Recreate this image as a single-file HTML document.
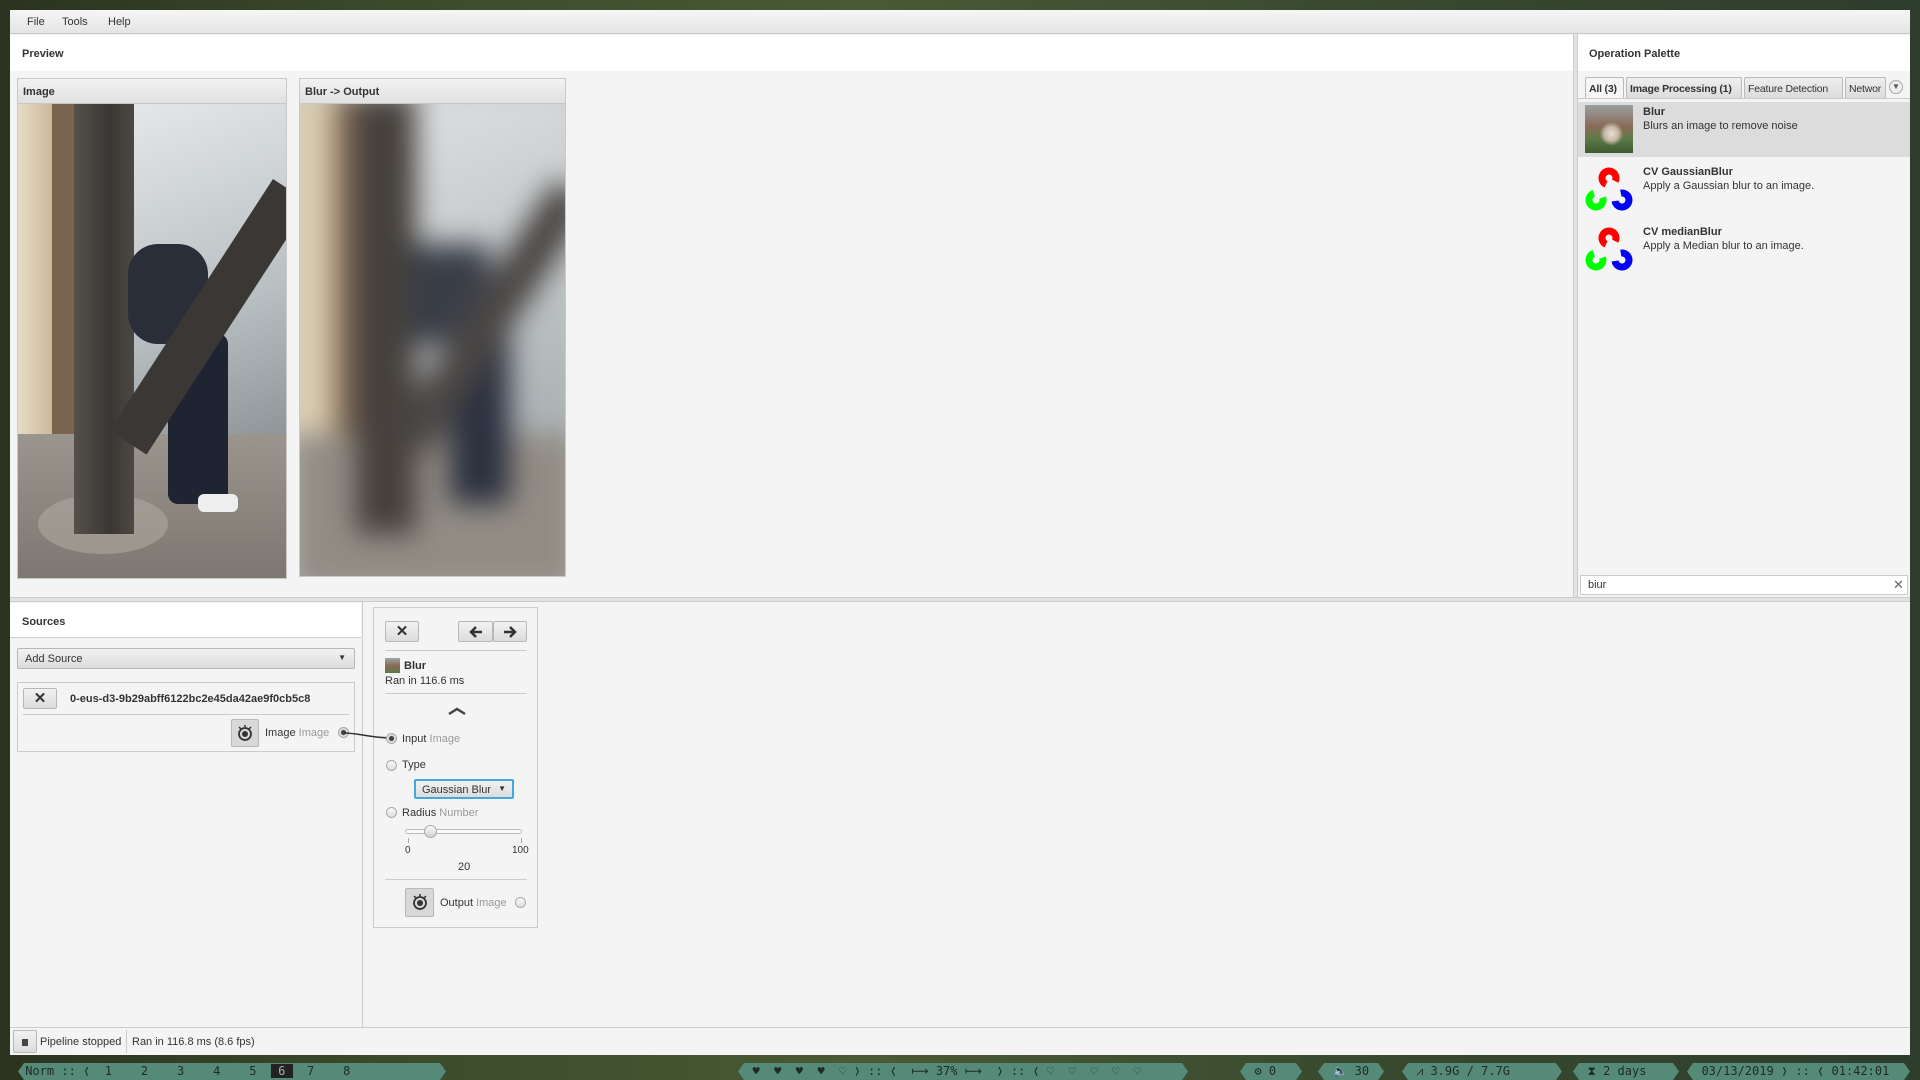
<!DOCTYPE html>
<html><head><meta charset="utf-8"><style>
*{box-sizing:border-box;margin:0;padding:0}
body{width:1920px;height:1080px;overflow:hidden;position:relative;font-family:"Liberation Sans",sans-serif;font-size:11px;color:#333;
background:linear-gradient(90deg,#2b3320 0%,#3b4a2a 20%,#4a5a35 45%,#394a30 70%,#2e3d2c 100%)}
.a{position:absolute}
.win{left:10px;top:10px;width:1900px;height:1045px;background:#f4f4f4}
.menu{left:10px;top:10px;width:1900px;height:24px;background:linear-gradient(#f6f6f6,#e4e4e4);border-bottom:1px solid #c8c8c8}
.menu span{position:absolute;top:6px;font-size:11px;color:#333}
.hdr{background:#fff;font-weight:bold;font-size:11px;color:#333}
.card{border:1px solid #c8c8c8;background:#fff;overflow:hidden}
.card .h{height:25px;background:linear-gradient(#f2f2f2,#e0e0e0);border-bottom:1px solid #c8c8c8;font-weight:bold;padding:7px 5px;font-size:11px}
.btn{border:1px solid #b8b8b8;border-radius:2px;background:linear-gradient(#f2f2f2,#dcdcdc);text-align:center}
.tab{top:77px;height:21px;border:1px solid #bbb;border-bottom:none;background:linear-gradient(#eee,#dcdcdc);font-size:10.5px;padding:5px 3px;white-space:nowrap;overflow:hidden;border-radius:2px 2px 0 0;letter-spacing:-0.2px}
.radio{width:11px;height:11px;border-radius:50%;border:1px solid #aaa;background:linear-gradient(#fafafa,#ddd)}
.g{color:#999}
.tb{top:1063px;height:17px;background:#568a78;color:#1d2a26;font-family:"DejaVu Sans Mono",monospace;font-size:12px;line-height:17px;white-space:pre;clip-path:polygon(6px 0,calc(100% - 6px) 0,100% 50%,calc(100% - 6px) 100%,6px 100%,0 50%)}
</style></head><body>
<div class="a win"></div>
<div class="a menu"><span style="left:17px">File</span><span style="left:52px">Tools</span><span style="left:98px">Help</span></div>

<div class="a hdr" style="left:10px;top:35px;width:1563px;height:36px;padding:13px 12px">Preview</div>
<div class="a card" style="left:17px;top:78px;width:270px;height:501px">
 <div class="h">Image</div>
 <div class="a" style="left:0;top:25px;width:270px;height:476px;overflow:hidden;background:#cfd2d2">
  <div class="a" style="left:0;top:0;width:34px;height:476px;background:linear-gradient(90deg,#e6dcc6,#cbb99a)"></div>
  <div class="a" style="left:34px;top:0;width:22px;height:476px;background:#7a6450"></div>
  <div class="a" style="left:116px;top:0;width:154px;height:330px;background:linear-gradient(160deg,#e4e7e8,#b9c0c3 60%,#8f9598)"></div>
  <div class="a" style="left:0;top:330px;width:270px;height:146px;background:linear-gradient(#9b958e,#7d7771)"></div>
  <div class="a" style="left:20px;top:390px;width:130px;height:60px;border-radius:50%;background:#a9a39a;opacity:.7"></div>
  <div class="a" style="left:56px;top:0;width:60px;height:430px;background:linear-gradient(90deg,#55504b,#3a3633 60%,#4d4843)"></div>
  <div class="a" style="left:110px;top:140px;width:80px;height:100px;background:#2a2e38;border-radius:30px"></div>
  <div class="a" style="left:150px;top:230px;width:60px;height:170px;background:#1f2433;border-radius:10px"></div>
  <div class="a" style="width:44px;height:300px;background:#3a3735;transform:rotate(33deg);transform-origin:top left;left:255px;top:75px"></div>
  <div class="a" style="left:180px;top:390px;width:40px;height:18px;background:#eee;border-radius:6px"></div>
 </div>
</div>
<div class="a card" style="left:299px;top:78px;width:267px;height:499px">
 <div class="h">Blur -&gt; Output</div>
 <div class="a" style="left:0;top:25px;width:267px;height:474px;overflow:hidden;background:#c8cbcb">
  <div style="filter:blur(14px);position:absolute;left:-10px;top:-10px;width:290px;height:500px">
  <div class="a" style="left:0;top:0;width:44px;height:500px;background:#dccdb0"></div>
  <div class="a" style="left:44px;top:0;width:22px;height:500px;background:#7a6450"></div>
  <div class="a" style="left:126px;top:0;width:164px;height:340px;background:linear-gradient(160deg,#dde0e1,#a8aeb1)"></div>
  <div class="a" style="left:0;top:340px;width:290px;height:160px;background:#928c85"></div>
  <div class="a" style="left:66px;top:0;width:60px;height:440px;background:#45403c"></div>
  <div class="a" style="left:120px;top:150px;width:80px;height:100px;background:#3a3e48"></div>
  <div class="a" style="left:160px;top:240px;width:60px;height:170px;background:#2c3140"></div>
  <div class="a" style="width:44px;height:300px;background:#4a4644;transform:rotate(33deg);transform-origin:top left;left:265px;top:85px"></div>
  </div>
 </div>
</div>

<div class="a" style="left:1573px;top:34px;width:5px;height:563px;background:#e2e2e2;border-left:1px solid #ccc;border-right:1px solid #ccc"></div>
<div class="a" style="left:10px;top:597px;width:1900px;height:5px;background:#e2e2e2;border-top:1px solid #ccc;border-bottom:1px solid #ccc"></div>

<div class="a hdr" style="left:1578px;top:35px;width:332px;height:36px;padding:13px 11px">Operation Palette</div>
<div class="a tab" style="left:1585px;width:39px;background:#f6f6f6;font-weight:bold">All (3)</div>
<div class="a tab" style="left:1626px;width:116px;font-weight:bold">Image Processing (1)</div>
<div class="a tab" style="left:1744px;width:99px">Feature Detection</div>
<div class="a tab" style="left:1845px;width:41px">Networ</div>
<div class="a" style="left:1889px;top:80px;width:14px;height:14px;border-radius:50%;border:1px solid #aaa;background:#eee;font-size:8px;text-align:center;line-height:12px;color:#555">▼</div>
<div class="a" style="left:1578px;top:98px;width:332px;height:1px;background:#ccc"></div>
<div class="a" style="left:1578px;top:102px;width:332px;height:55px;background:#dcdcdc"></div>
<div class="a" style="left:1585px;top:105px;width:48px;height:48px;background:radial-gradient(circle at 55% 60%,#e8e0d8 0,#c8b8a8 18%,transparent 30%),linear-gradient(#9aa0a0,#8a6a58 45%,#5e7a48 70%,#3c5a30)"></div>
<div class="a" style="left:1643px;top:106px;font-weight:bold">Blur</div>
<div class="a" style="left:1643px;top:120px">Blurs an image to remove noise</div>
<svg class="a" style="left:1585px;top:166px" width="50" height="48" viewBox="0 0 50 48">
 <circle cx="24" cy="12" r="7" fill="none" stroke="#f00" stroke-width="7" stroke-dasharray="33 11" transform="rotate(115 24 12)"/>
 <circle cx="11" cy="34" r="7" fill="none" stroke="#0f0" stroke-width="7" stroke-dasharray="33 11" transform="rotate(-20 11 34)"/>
 <circle cx="37" cy="34" r="7" fill="none" stroke="#00f" stroke-width="7" stroke-dasharray="33 11" transform="rotate(-100 37 34)"/>
</svg>
<div class="a" style="left:1643px;top:166px;font-weight:bold">CV GaussianBlur</div>
<div class="a" style="left:1643px;top:180px">Apply a Gaussian blur to an image.</div>
<svg class="a" style="left:1585px;top:226px" width="50" height="48" viewBox="0 0 50 48">
 <circle cx="24" cy="12" r="7" fill="none" stroke="#f00" stroke-width="7" stroke-dasharray="33 11" transform="rotate(115 24 12)"/>
 <circle cx="11" cy="34" r="7" fill="none" stroke="#0f0" stroke-width="7" stroke-dasharray="33 11" transform="rotate(-20 11 34)"/>
 <circle cx="37" cy="34" r="7" fill="none" stroke="#00f" stroke-width="7" stroke-dasharray="33 11" transform="rotate(-100 37 34)"/>
</svg>
<div class="a" style="left:1643px;top:226px;font-weight:bold">CV medianBlur</div>
<div class="a" style="left:1643px;top:240px">Apply a Median blur to an image.</div>
<div class="a" style="left:1580px;top:575px;width:328px;height:20px;background:#fff;border:1px solid #ccc;padding:3px 7px">biur</div>
<div class="a" style="left:1893px;top:577px;font-size:13px;color:#666">✕</div>

<div class="a hdr" style="left:10px;top:603px;width:351px;height:35px;padding:13px 12px;border-bottom:1px solid #ccc">Sources</div>
<div class="a" style="left:362px;top:602px;width:1px;height:426px;background:#ccc"></div>
<div class="a btn" style="left:17px;top:648px;width:338px;height:21px;text-align:left;padding:4px 7px">Add Source<span style="position:absolute;right:8px;top:4px;font-size:8px">▼</span></div>
<div class="a" style="left:17px;top:682px;width:338px;height:70px;border:1px solid #ccc"></div>
<div class="a btn" style="left:23px;top:688px;width:34px;height:21px;font-size:15px;font-weight:bold;line-height:19px">✕</div>
<div class="a" style="left:70px;top:693px;font-weight:bold">0-eus-d3-9b29abff6122bc2e45da42ae9f0cb5c8</div>
<div class="a" style="left:23px;top:714px;width:326px;height:1px;background:#ccc"></div>
<div class="a btn" style="left:231px;top:719px;width:28px;height:28px;background:#d8d8d8"></div>
<svg class="a" style="left:236px;top:724px" width="18" height="18" viewBox="0 0 18 18"><circle cx="9" cy="10" r="6" fill="none" stroke="#333" stroke-width="1.8"/><circle cx="9" cy="10" r="3" fill="#333"/><path d="M3 3l2 2M15 3l-2 2M9 1v2" stroke="#333" stroke-width="1.5"/></svg>
<div class="a" style="left:265px;top:727px">Image <span class="g">Image</span></div>
<div class="a radio" style="left:338px;top:727px;background:radial-gradient(#444 35%,#ddd 45%)"></div>

<div class="a" style="left:373px;top:607px;width:165px;height:321px;border:1px solid #ccc;background:#f4f4f4"></div>
<svg class="a" style="left:340px;top:726px" width="55" height="18"><path d="M3 7 C20 7,30 12,52 12" fill="none" stroke="#333" stroke-width="1.6"/></svg>
<div class="a btn" style="left:385px;top:621px;width:34px;height:21px;font-size:15px;font-weight:bold;line-height:19px">✕</div>
<div class="a btn" style="left:458px;top:621px;width:35px;height:21px"><svg width="16" height="14" style="margin-top:3px" viewBox="0 0 16 14"><path d="M14 7H3M8 2L3 7l5 5" fill="none" stroke="#333" stroke-width="2.5"/></svg></div>
<div class="a btn" style="left:493px;top:621px;width:34px;height:21px"><svg width="16" height="14" style="margin-top:3px" viewBox="0 0 16 14"><path d="M2 7h11M8 2l5 5-5 5" fill="none" stroke="#333" stroke-width="2.5"/></svg></div>
<div class="a" style="left:385px;top:650px;width:142px;height:1px;background:#ccc"></div>
<div class="a" style="left:385px;top:658px;width:15px;height:15px;background:linear-gradient(#9aa,#8a6a58 50%,#5e7a48)"></div>
<div class="a" style="left:404px;top:660px;font-weight:bold">Blur</div>
<div class="a" style="left:385px;top:675px">Ran in 116.6 ms</div>
<div class="a" style="left:385px;top:693px;width:142px;height:1px;background:#ccc"></div>
<svg class="a" style="left:447px;top:706px" width="20" height="10"><path d="M2 8 L10 3 L18 8" fill="none" stroke="#444" stroke-width="2.5"/></svg>
<div class="a radio" style="left:386px;top:733px;background:radial-gradient(#444 35%,#ddd 45%)"></div>
<div class="a" style="left:402px;top:733px">Input <span class="g">Image</span></div>
<div class="a radio" style="left:386px;top:760px"></div>
<div class="a" style="left:402px;top:759px">Type</div>
<div class="a btn" style="left:414px;top:779px;width:100px;height:20px;border:2px solid #3fa9e0;padding:3px 6px;text-align:left">Gaussian Blur<span style="position:absolute;right:6px;top:3px;font-size:8px">▼</span></div>
<div class="a radio" style="left:386px;top:807px"></div>
<div class="a" style="left:402px;top:807px">Radius <span class="g">Number</span></div>
<div class="a" style="left:405px;top:829px;width:117px;height:5px;border:1px solid #bbb;border-radius:3px;background:#fafafa"></div>
<div class="a radio" style="left:424px;top:825px;width:13px;height:13px;background:linear-gradient(#fafafa,#d0d0d0)"></div>
<div class="a" style="left:408px;top:838px;width:1px;height:5px;background:#aaa"></div>
<div class="a" style="left:521px;top:838px;width:1px;height:5px;background:#aaa"></div>
<div class="a" style="left:405px;top:845px;font-size:10px">0</div>
<div class="a" style="left:512px;top:845px;font-size:10px">100</div>
<div class="a" style="left:458px;top:861px">20</div>
<div class="a" style="left:385px;top:879px;width:142px;height:1px;background:#ccc"></div>
<div class="a btn" style="left:405px;top:888px;width:29px;height:29px;background:#d8d8d8"></div>
<svg class="a" style="left:411px;top:893px" width="18" height="18" viewBox="0 0 18 18"><circle cx="9" cy="10" r="6" fill="none" stroke="#333" stroke-width="1.8"/><circle cx="9" cy="10" r="3" fill="#333"/><path d="M3 3l2 2M15 3l-2 2M9 1v2" stroke="#333" stroke-width="1.5"/></svg>
<div class="a" style="left:440px;top:897px">Output <span class="g">Image</span></div>
<div class="a radio" style="left:515px;top:897px"></div>

<div class="a" style="left:10px;top:1027px;width:1900px;height:1px;background:#ccc"></div>
<div class="a btn" style="left:13px;top:1030px;width:24px;height:23px"><div style="width:6px;height:7px;background:#444;margin:8px auto"></div></div>
<div class="a" style="left:40px;top:1036px">Pipeline stopped</div>
<div class="a" style="left:126px;top:1030px;width:1px;height:23px;background:#ccc"></div>
<div class="a" style="left:132px;top:1036px">Ran in 116.8 ms (8.6 fps)</div>

<div class="a tb" style="left:18px;width:428px"> Norm :: ❬  1    2    3    4    5  <span style="background:#222;color:#aaa"> 6 </span>  7    8</div>
<div class="a tb" style="left:738px;width:450px">  ♥  ♥  ♥  ♥  ♡ ❭ :: ❬  ⟼ 37% ⟼  ❭ :: ❬ ♡  ♡  ♡  ♡  ♡</div>
<div class="a tb" style="left:1240px;width:62px">  ⚙ 0</div>
<div class="a tb" style="left:1318px;width:66px">  🔈 30</div>
<div class="a tb" style="left:1402px;width:160px">  ⩘ 3.9G / 7.7G</div>
<div class="a tb" style="left:1573px;width:106px">  ⧗ 2 days</div>
<div class="a tb" style="left:1687px;width:223px">  03/13/2019 ❭ :: ❬ 01:42:01</div>
</body></html>
